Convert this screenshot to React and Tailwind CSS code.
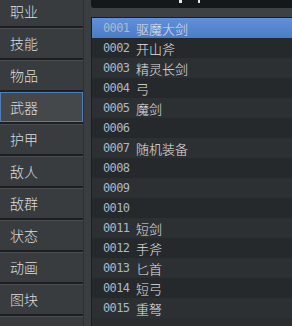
import React from 'react';

const tabs = ['职业', '技能', '物品', '武器', '护甲', '敌人', '敌群', '状态', '动画', '图块', ''];

const items = [
    ['0001', '驱魔大剑'],
    ['0002', '开山斧'],
    ['0003', '精灵长剑'],
    ['0004', '弓'],
    ['0005', '魔剑'],
    ['0006', ''],
    ['0007', '随机装备'],
    ['0008', ''],
    ['0009', ''],
    ['0010', ''],
    ['0011', '短剑'],
    ['0012', '手斧'],
    ['0013', '匕首'],
    ['0014', '短弓'],
    ['0015', '重弩'],
];

function App() {
    return (
        <div className="w-[292px] h-[326px] overflow-hidden flex bg-[#2a2d30] font-['Noto_Sans_CJK_SC',sans-serif]">
            {/* 左侧标签 */}
            <div className="w-[83px] shrink-0 flex flex-col gap-[2px] -mt-[4px] bg-[#1d1f22]">
                {tabs.map((t, i) => (
                    <div
                        key={i}
                        className={
                            'h-[30px] shrink-0 flex items-center pl-[10px] text-[14px] font-light text-[#dcdcdc] border-t border-[#4a4d50] ' +
                            (t === '武器'
                                ? 'bg-[#45484b] outline outline-1 outline-[#4f7fb8] -outline-offset-1'
                                : 'bg-[#393c3f]')
                        }
                    >
                        {t}
                    </div>
                ))}
            </div>

            {/* 分隔条 */}
            <div className="w-[8px] shrink-0 bg-[#3b3e41] border-l border-[#2e3134]" />

            {/* 列表 */}
            <div className="flex-1 flex flex-col bg-[#3e4144]">
                <div className="h-[8px] shrink-0 bg-[#15181b] rounded-bl-[3px] overflow-hidden relative">
                    <div className="absolute left-[88px] top-0 w-[3px] h-[3px] bg-[#e6e6e6]" />
                    <div className="absolute left-[107px] top-0 w-[2px] h-[3px] bg-[#e6e6e6]" />
                </div>
                <div className="h-[9px] shrink-0" />
                <div className="flex-1 border-t border-l border-[#1b1d20] bg-[#2a2d30]">
                    {items.map(([n, name], i) => (
                        <div
                            key={n}
                            className={
                                'h-[20px] flex items-center pl-[11px] ' +
                                (i === 0
                                    ? 'bg-gradient-to-b from-[#6190dc] to-[#4d7cc6]'
                                    : i % 2 === 1
                                    ? 'bg-[#26292c]'
                                    : 'bg-[#2d3033]')
                            }
                        >
                            <span className="font-['DejaVu_Sans_Mono',monospace] text-[12px] tracking-[-0.6px] text-[#a9b8cb] w-[33px]">{n}</span>
                            <span className="text-[13px] font-light text-[#e2e2e2] leading-none">{name}</span>
                        </div>
                    ))}
                </div>
            </div>
        </div>
    );
}

export default App;
